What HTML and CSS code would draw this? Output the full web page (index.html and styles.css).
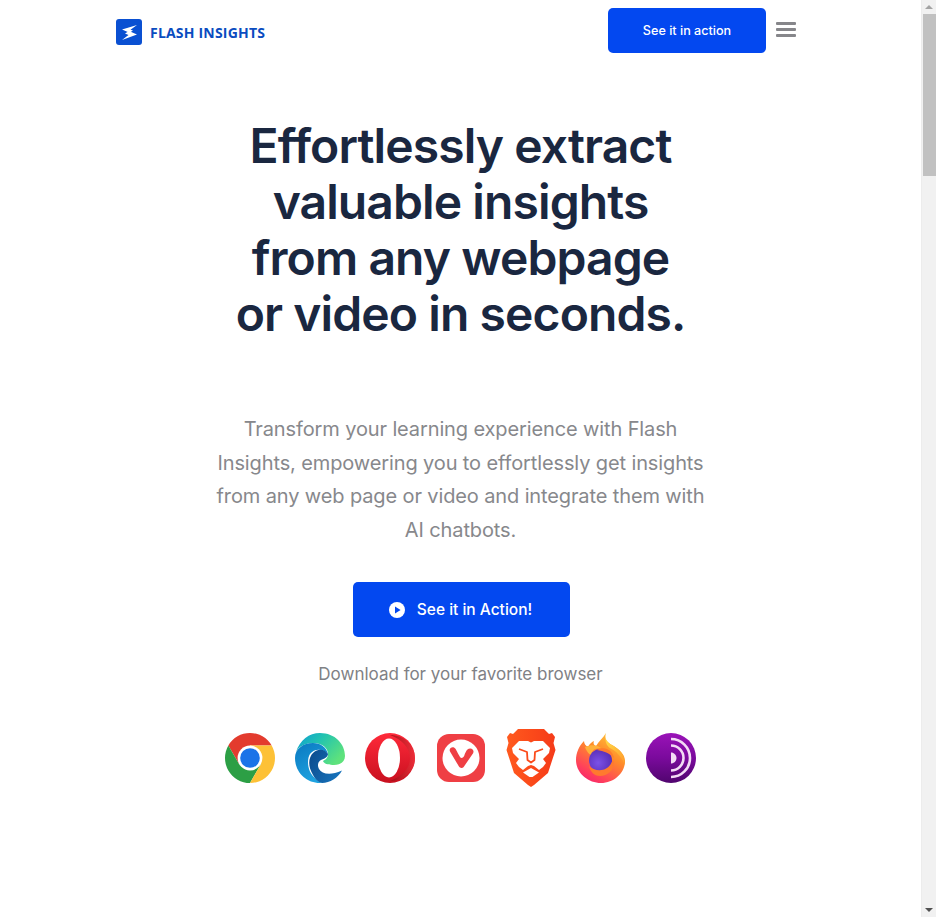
FILE: index.html
```html
<!DOCTYPE html>
<html lang="en">
<head>
<meta charset="utf-8">
<title>Flash Insights</title>
<link rel="stylesheet" href="styles.css">
</head>
<body>
<div class="page">
  <header class="nav">
    <a class="brand" href="#">
      <svg class="brand-mark" viewBox="0 0 26 26"><rect width="26" height="26" rx="3" fill="#0a50d2"/><path d="M21 6 6 10.500 13.500 13.800 17 11.500 14.500 10.800Z" fill="#fff"/><path d="M6 21 21 15.500 13 12 9 14.500 12.500 16Z" fill="#fff"/></svg>
      <span class="brand-name">FLASH INSIGHTS</span>
    </a>
    <div class="nav-actions">
      <a class="btn btn-nav" href="#">See it in action</a>
      <button class="burger" aria-label="Menu"><span></span><span></span><span></span></button>
    </div>
  </header>
  <main class="hero">
    <h1 class="title">Effortlessly extract<br>valuable insights<br>from any webpage<br>or video in seconds.</h1>
    <p class="lead">Transform your learning experience with Flash<br>Insights, empowering you to effortlessly get insights<br>from any web page or video and integrate them with<br>AI chatbots.</p>
    <a class="btn btn-cta" href="#">
      <svg class="play" viewBox="0 0 16 16"><circle cx="8" cy="8" r="8" fill="#fff"/><path d="M6 4.400 11.600 8 6 11.600z" fill="#0348f0"/></svg>
      <span>See it in Action!</span>
    </a>
    <p class="download">Download for your favorite browser</p>
    <ul class="browsers">
      <li>
        <svg viewBox="0 0 50 50"><path d="M3.350 12.500A25 25 0 0 1 46.650 12.500H25V25L14.200 31.250Z" fill="#e33b2e"/><path d="M3.350 12.500A25 25 0 0 0 25 50L35.800 31.250 25 25 14.200 31.250Z" fill="#2c9f45"/><path d="M46.650 12.500A25 25 0 0 1 25 50L35.800 31.250 25 25V12.500Z" fill="#fdc136"/><circle cx="25" cy="25" r="12.400" fill="#fff"/><circle cx="25" cy="25" r="9.800" fill="#1a73e8"/></svg>
      </li>
      <li>
        <svg viewBox="0 0 50 50"><defs><linearGradient id="e1" x1="0" y1="0" x2="1" y2="0.600"><stop offset="0" stop-color="#0c9ad8"/><stop offset=".45" stop-color="#22c3b0"/><stop offset="1" stop-color="#5ee27c"/></linearGradient><linearGradient id="e2" x1="0" y1="0" x2="0.500" y2="1"><stop offset="0" stop-color="#0a78c0"/><stop offset="1" stop-color="#1fa3e0"/></linearGradient><linearGradient id="e3" x1="0" y1="0" x2="1" y2="0.500"><stop offset="0" stop-color="#0c4a8c"/><stop offset="1" stop-color="#1670b8"/></linearGradient></defs>
        <path d="M1 19C5 7 14 0 25 0 40 0 50 11 50 23 50 29 45 32 39 32 34 32 29 31 28 28 30 27 33 25 33 21 33 15 27 10 19 10 11 10 4 13 1 19Z" fill="url(#e1)"/>
        <path d="M0 25C0 16 8 10 18 10 26 10 31 14 33 21 27 15 19 16 15 21 11 28 13 40 21 46 23 48 25 49.500 28 50H25C11 50 0 39 0 25Z" fill="url(#e2)"/>
        <path d="M33 21C33 24 29 26 26 27 23 29 22 32 24 36 27 41 35 43 47 37.500 43 45 35 50 27 50 23 49 20 46 18 42 12 32 14 24 18 20 23 15 30 16 33 21Z" fill="url(#e3)"/>
      </li>
      <li>
        <svg viewBox="0 0 50 50"><defs><linearGradient id="o1" x1="0" y1="0" x2="0" y2="1"><stop offset="0" stop-color="#ff2a3a"/><stop offset="1" stop-color="#c8101f"/></linearGradient><linearGradient id="o2" x1="0" y1="0" x2="1" y2="0"><stop offset="0" stop-color="#8e0d12"/><stop offset="1" stop-color="#f0323c"/></linearGradient></defs><circle cx="25" cy="25" r="25" fill="url(#o1)"/><path d="M25 2C36 6 45 14 45 25S36 44 25 48C39 48 50 38 50 25S39 2 25 2Z" fill="url(#o2)" opacity=".75"/><ellipse cx="24" cy="25" rx="11" ry="19.500" fill="#fff"/></svg>
      </li>
      <li class="browser-shifted">
        <svg viewBox="0 0 50 50"><rect x="1" y="1" width="48" height="48" rx="12" fill="#ef3f44"/><circle cx="25" cy="25" r="18.500" fill="#fff"/><path d="M14 18.500c-1.400-3 1.800-5 4-4 1.500.8 2 2 3 4 1 2 1.800 3.500 3 5.500 1 1.500 3 1 3.800-.4 1-1.600.8-2.800 2-4.600 1-2 2-3.500 4.500-3.500 2.500 0 4 2.500 2.800 4.700L28 33.500c-1.200 2-4 2-5.200-.2Z" fill="#ef3f44"/></svg>
      </li>
      <li>
        <svg class="tall" viewBox="0 0 50 58"><defs><linearGradient id="b1" x1="0" y1="0" x2="1" y2="0"><stop offset="0" stop-color="#ff5a1f"/><stop offset=".5" stop-color="#fb4a1a"/><stop offset="1" stop-color="#f53b1a"/></linearGradient></defs><path d="M12 0H38L43 5 46 4 49 8 47.500 14 49.500 21 42 44 28 56 25 58 22 56 8 44 .5 21 2.500 14 1 8 4 4 7 5Z" fill="url(#b1)"/><path d="M13 12H22L25 13.500 28 12H37L44 19 43 24 37 30 40 34 37 38 33 41 28 37 25 36 22 37 17 41 13 38 10 34 13 30 7 24 6 19Z" fill="#fff"/><path d="M25 39 33 43.500 26.500 48H23.500L17 43.500Z" fill="#fff"/><path d="M13 20 21 23 21.500 31 25 33.500 28.500 31 29 23 37 20" fill="none" stroke="#fb4a1a" stroke-width="1.800" stroke-linejoin="round"/></svg>
      </li>
      <li>
        <svg viewBox="0 0 50 50"><defs><linearGradient id="f1" x1=".8" y1="0" x2=".2" y2="1"><stop offset="0" stop-color="#ffc93c"/><stop offset=".4" stop-color="#ff8a2a"/><stop offset=".8" stop-color="#ff3f5c"/><stop offset="1" stop-color="#f5236e"/></linearGradient><radialGradient id="f2" cx=".4" cy=".6" r=".6"><stop offset="0" stop-color="#7b52e8"/><stop offset="1" stop-color="#5a2fb8"/></radialGradient><linearGradient id="f3" x1="0" y1="0" x2="1" y2="1"><stop offset="0" stop-color="#ffe24a"/><stop offset="1" stop-color="#ff9a2a"/></linearGradient></defs>
        <path d="M30 0C28 6 31 9 36 12 43 16 49 21 49 28 49 40 38 50 25 50 12 50 0 40 0 27 0 20 3 13 8 8 8 11 10 13 12 14 14 10 16 9 18 8 17 11 18 12 20 13 23 8 27 5 30 0Z" fill="url(#f1)"/>
        <path d="M30 0C28 6 31 9 36 12 43 16 49 21 49 32 45 23 40 18 34 15 31 13 28 8 30 0Z" fill="url(#f3)"/>
        <path d="M9 14C15 11 22 12 25 15 17 15 15 19 17 21 19 20 22 20 25 21 20 26 12 23 9 14Z" fill="#ffb13a"/>
        <circle cx="24.500" cy="27.500" r="11.500" fill="url(#f2)"/>
        <path d="M13 33C19 39 33 40 37 26 40 35 33 43 24 43 18 43 14 38 13 33ZM21 17C28 13 36 16 38 25 33 20 28 18 21 17Z" fill="#ff7a2e"/>
      </li>
      <li>
        <svg viewBox="0 0 50 50"><defs><linearGradient id="t1" x1="0" y1="0" x2="0" y2="1"><stop offset="0" stop-color="#9a13b8"/><stop offset=".5" stop-color="#7a0a9c"/><stop offset="1" stop-color="#50056e"/></linearGradient></defs><circle cx="25" cy="25" r="25" fill="url(#t1)"/><path d="M25 19.500C28 19.500 30.500 22 30.500 25S28 30.500 25 30.500Z" fill="#f3dcf5"/><path d="M25 12.500A12.500 12.500 0 0 1 25 37.500" fill="none" stroke="#f3dcf5" stroke-width="2.600"/><path d="M25 6A19 19 0 0 1 25 44" fill="none" stroke="#f3dcf5" stroke-width="2.600"/></svg>
      </li>
    </ul>
  </main>
</div>
<aside class="scrollbar" aria-hidden="true">
  <span class="arrow arrow-up"></span>
  <span class="thumb"></span>
  <span class="track"></span>
  <span class="arrow arrow-down"></span>
</aside>
</body>
</html>
```
FILE: styles.css
```css
* { box-sizing: border-box; }
html, body { margin: 0; height: 100%; overflow: hidden; }
body { display: flex; background: #fff; font-family: Inter, "Liberation Sans", sans-serif; }
a { text-decoration: none; }
.page { flex: 1; min-width: 0; }
.scrollbar { width: 15px; flex: none; display: flex; flex-direction: column; align-items: center; background: #f1f1f1; border-left: 1px solid #ececec; }
.thumb { width: 13px; height: 162px; margin-top: 1px; background: #c1c1c1; flex: none; }
.track { flex: 1; }
.arrow { flex: none; width: 0; height: 0; border-left: 4px solid transparent; border-right: 4px solid transparent; }
.arrow-up { margin-top: 5px; margin-bottom: 4px; border-bottom: 4px solid #a3a3a3; }
.arrow-down { margin-bottom: 5px; border-top: 4px solid #505050; }

.nav { width: 689px; margin: 0 auto; padding-top: 8px; display: flex; justify-content: space-between; align-items: flex-start; }
.brand { display: flex; align-items: center; gap: 8px; margin-top: 11px; }
.brand-mark { width: 26px; height: 26px; display: block; }
.brand-name { font-family: "Open Sans", sans-serif; font-weight: 700; font-size: 14px; letter-spacing: .2px; color: #0a4cc0; white-space: nowrap; }
.nav-actions { display: flex; align-items: flex-start; gap: 10px; margin-right: 9px; }
.btn { display: flex; align-items: center; justify-content: center; background: #0348f0; color: #fff; border-radius: 5px; font-weight: 500; }
.btn-nav { width: 158px; height: 45px; font-size: 12.600px; }
.burger { display: flex; flex-direction: column; gap: 3px; width: 20px; margin-top: 14px; padding: 0; border: 0; background: none; }
.burger span { display: block; height: 3px; border-radius: 1px; background: #86868a; }

.hero { display: flex; flex-direction: column; align-items: center; text-align: center; }
.title { margin: 65px 0 0; font-size: 48px; line-height: 56px; font-weight: 600; color: #1a2740; letter-spacing: -0.900px; white-space: nowrap; }
.lead { margin: 71px 0 0; font-size: 20px; line-height: 33.600px; letter-spacing: -0.120px; color: #87888c; white-space: nowrap; }
.btn-cta { width: 217px; height: 55px; margin: 35px 0 0 2px; padding-right: 2px; gap: 12px; font-size: 15.500px; }
.play { width: 16px; height: 16px; display: block; }
.download { margin: 26px 0 0; font-size: 17px; line-height: 22px; color: #808185; }
.browsers { list-style: none; display: flex; gap: 20px; margin: 48px 0 0; padding: 0; }
.browsers li { width: 50px; height: 50px; display: flex; align-items: center; justify-content: center; }
.browsers li.browser-shifted { margin-left: 1px; }
.browsers svg { width: 50px; height: 50px; display: block; flex: none; }
.browsers svg.tall { height: 58px; }
```
